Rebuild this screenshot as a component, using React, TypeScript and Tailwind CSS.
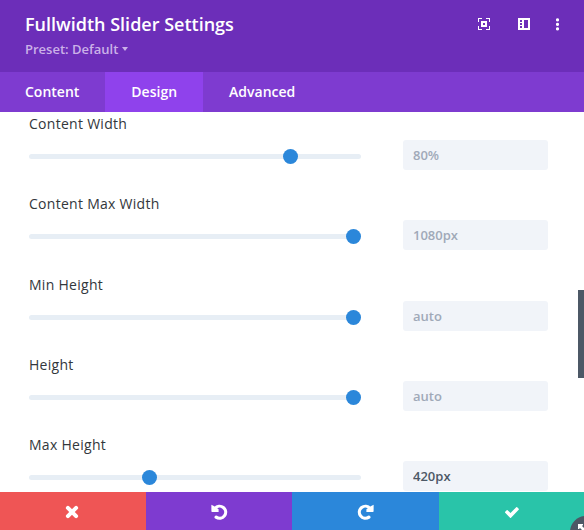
import React, { useState } from 'react';

interface SliderSetting {
  label: string;
  placeholder: string;
  value: string;
  position: number;
}

const SETTINGS: SliderSetting[] = [
  { label: 'Content Width', placeholder: '80%', value: '', position: 254 },
  { label: 'Content Max Width', placeholder: '1080px', value: '', position: 317 },
  { label: 'Min Height', placeholder: 'auto', value: '', position: 317 },
  { label: 'Height', placeholder: 'auto', value: '', position: 317 },
  { label: 'Max Height', placeholder: 'none', value: '420px', position: 113 },
];

const TABS = ['Content', 'Design', 'Advanced'];

const ExpandIcon = () => (
  <svg width="12" height="12" viewBox="0 0 12 12" fill="currentColor" shapeRendering="crispEdges">
    <path d="M0 0h4v1H1v3H0zM8 0h4v4h-1V1H8zM0 8h1v3h3v1H0zM11 8h1v4H8v-1h3z" />
    <path fillRule="evenodd" d="M3 3h6v6H3zM5 5v2h2V5z" />
  </svg>
);

const PanelIcon = () => (
  <svg width="12" height="12" viewBox="0 0 12 12" fill="currentColor" shapeRendering="crispEdges">
    <path fillRule="evenodd" d="M0 0h12v12H0zM2 2v2h2V2zM2 5v2h2V5zM2 8v2h2V8zM6 2v8h4V2z" />
  </svg>
);

const DotsIcon = () => (
  <svg width="3" height="13" viewBox="0 0 3 13" fill="currentColor">
    <circle cx="1.5" cy="1.9" r="1.6" />
    <circle cx="1.5" cy="6.4" r="1.6" />
    <circle cx="1.5" cy="10.9" r="1.6" />
  </svg>
);

const CloseIcon = () => (
  <svg width="28" height="28" viewBox="0 0 28 28">
    <path d="M9.9 9.9l8.2 8.2M18.1 9.9l-8.2 8.2" stroke="currentColor" strokeWidth="4" strokeLinecap="round" />
  </svg>
);

const ArrowIcon = ({ flipped = false }: { flipped?: boolean }) => (
  <svg width="28" height="28" viewBox="0 0 28 28" className={flipped ? '-scale-x-100' : ''}>
    <path d="M10 10.4a6 6 0 1 1 1.1 8.7" fill="none" stroke="currentColor" strokeWidth="3.2" strokeLinecap="round" />
    <path d="M6.4 6.8l2.4 1.1 4.8 3.3v2.8H7.2a.8.8 0 0 1-.8-.8z" fill="currentColor" />
  </svg>
);

const CheckIcon = () => (
  <svg width="28" height="28" viewBox="0 0 28 28" fill="currentColor">
    <path d="M19.203 9.21a.677.677 0 0 0-.98 0l-5.71 5.9-2.85-2.95a.675.675 0 0 0-.98 0l-1.48 1.523a.737.737 0 0 0 0 1.015l4.82 4.979a.677.677 0 0 0 .98 0l7.68-7.927a.737.737 0 0 0 0-1.015l-1.48-1.525z" />
  </svg>
);

const App: React.FC = () => {
  const [activeTab, setActiveTab] = useState('Design');

  return (
    <div className="relative flex flex-col w-[584px] h-[530px] overflow-hidden bg-white font-['Open_Sans',sans-serif]">
      {/* Header */}
      <header className="h-[72px] shrink-0 bg-[#6c2eb9] text-white flex items-start justify-between pl-[25px] pr-[25px]">
        <div className="pt-3">
          <h1 className="text-[18px] leading-6 font-semibold">Fullwidth Slider Settings</h1>
          <button className="flex items-center gap-1 mt-1 text-[13px] leading-[18px] font-semibold text-[#cbb1e8]">
            Preset: Default
            <svg width="6" height="4" viewBox="0 0 6 4" fill="currentColor"><path d="M0 0h6L3 4z" /></svg>
          </button>
        </div>
        <div className="flex items-start pt-[18px]">
          <button className="mr-7"><ExpandIcon /></button>
          <button className="mr-[26px]"><PanelIcon /></button>
          <button><DotsIcon /></button>
        </div>
      </header>

      {/* Tabs */}
      <nav className="h-10 shrink-0 flex bg-[#7e3bd0] text-white text-sm font-semibold">
        {TABS.map(tab => (
          <button
            key={tab}
            onClick={() => setActiveTab(tab)}
            className={`px-[26px] first:pl-[25px] h-full ${activeTab === tab ? 'bg-[#8f42ec]' : ''}`}
          >
            {tab}
          </button>
        ))}
      </nav>

      {/* Settings list */}
      <main className="flex-1 min-h-0 overflow-hidden flex">
        <div className="flex-1 pl-[29px]">
          {SETTINGS.map(setting => (
            <SliderRow key={setting.label} {...setting} />
          ))}
        </div>
        <div className="w-1.5 h-[88px] mt-[178px] bg-[#4c5866]" />
      </main>

      {/* Footer actions */}
      <footer className="h-[38px] shrink-0 grid grid-cols-[146px_146px_147px_145px] text-white">
        <button className="bg-[#ef5555] flex justify-center pt-1.5 pr-[3px]"><CloseIcon /></button>
        <button className="bg-[#7e3bd0] flex justify-center pt-1.5"><ArrowIcon /></button>
        <button className="bg-[#2b87da] flex justify-center pt-1.5"><ArrowIcon flipped /></button>
        <button className="bg-[#29c4a9] flex justify-center pt-1.5"><CheckIcon /></button>
      </footer>

      {/* Resize handle */}
      <div className="absolute left-[570px] top-[516px] size-8 rounded-full bg-[#4c5866] text-white">
        <svg width="16" height="16" viewBox="0 0 16 16" fill="currentColor" className="absolute left-2 top-2">
          <path d="M0 0h5v1L4 2l3 3-2 2-3-3-1 1H0z" />
        </svg>
      </div>
    </div>
  );
};

const SliderRow: React.FC<SliderSetting> = ({ label, placeholder, value, position }) => (
  <div className="h-[80.3px]">
    <div className="pt-0.5 text-sm leading-5 font-medium tracking-[0.28px] text-[#32373c]">{label}</div>
    <div className="flex items-center mt-1.5 h-[30px]">
      <div className="flex items-center w-[332px] h-[5px] mt-[3px] rounded-[3px] bg-[#e7eef5]">
        <div className="size-[15px] shrink-0 rounded-full bg-[#2b87da]" style={{ marginLeft: position }} />
      </div>
      <input
        className="ml-[42px] w-[145px] h-[30px] px-2.5 rounded-[3px] bg-[#f1f4f9] text-[13px] font-semibold text-[#4c5866] placeholder:text-[#a0a9b8]"
        defaultValue={value}
        placeholder={placeholder}
      />
    </div>
  </div>
);

export default App;
